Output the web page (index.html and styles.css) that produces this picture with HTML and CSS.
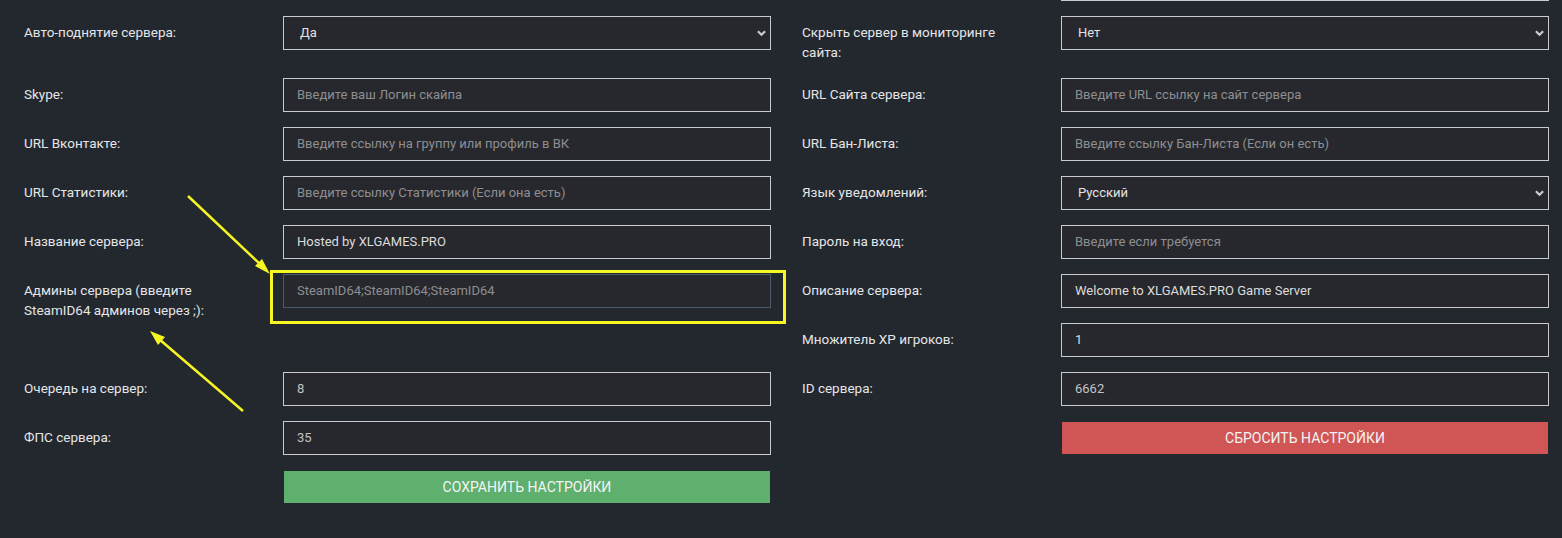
FILE: index.html
```html
<!DOCTYPE html>
<html lang="ru">
<head>
  <meta charset="UTF-8" />
  <title>Настройки сервера</title>
  <meta name="viewport" content="width=device-width, initial-scale=1" />
  <link rel="stylesheet" href="styles.css">
</head>
<body>

  <form class="settings">
    <!-- tail of the row above (page is scrolled) -->
    <div></div><div></div><div></div>
    <input type="text" class="field" value="" />

    <label class="lbl">Авто-поднятие сервера:</label>
    <div class="select-wrap">
      <select class="field"><option>Да</option><option>Нет</option></select>
      <svg class="chev" viewBox="0 0 10 6"><path d="M1 1l4 4 4-4" /></svg>
    </div>
    <label class="lbl lbl-r">Скрыть сервер в мониторинге сайта:</label>
    <div class="select-wrap">
      <select class="field"><option>Нет</option><option>Да</option></select>
      <svg class="chev" viewBox="0 0 10 6"><path d="M1 1l4 4 4-4" /></svg>
    </div>

    <label class="lbl">Skype:</label>
    <input type="text" class="field" placeholder="Введите ваш Логин скайпа" />
    <label class="lbl lbl-r">URL Сайта сервера:</label>
    <input type="text" class="field" placeholder="Введите URL ссылку на сайт сервера" />

    <label class="lbl">URL Вконтакте:</label>
    <input type="text" class="field" placeholder="Введите ссылку на группу или профиль в ВК" />
    <label class="lbl lbl-r">URL Бан-Листа:</label>
    <input type="text" class="field" placeholder="Введите ссылку Бан-Листа (Если он есть)" />

    <label class="lbl">URL Статистики:</label>
    <input type="text" class="field" placeholder="Введите ссылку Статистики (Если она есть)" />
    <label class="lbl lbl-r">Язык уведомлений:</label>
    <div class="select-wrap">
      <select class="field"><option>Русский</option><option>English</option></select>
      <svg class="chev" viewBox="0 0 10 6"><path d="M1 1l4 4 4-4" /></svg>
    </div>

    <label class="lbl">Название сервера:</label>
    <input type="text" class="field" value="Hosted by XLGAMES.PRO" />
    <label class="lbl lbl-r">Пароль на вход:</label>
    <input type="text" class="field" placeholder="Введите если требуется" />

    <label class="lbl span2">Админы сервера (введите SteamID64 админов через ;):</label>
    <input type="text" class="field focused" placeholder="SteamID64;SteamID64;SteamID64" />
    <label class="lbl lbl-r">Описание сервера:</label>
    <input type="text" class="field" value="Welcome to XLGAMES.PRO Game Server" />

    <div></div>
    <label class="lbl lbl-r">Множитель XP игроков:</label>
    <input type="text" class="field" value="1" />

    <label class="lbl">Очередь на сервер:</label>
    <input type="text" class="field dim" value="8" />
    <label class="lbl lbl-r">ID сервера:</label>
    <input type="text" class="field dim" value="6662" />

    <label class="lbl">ФПС сервера:</label>
    <input type="text" class="field dim" value="35" />
    <div></div>
    <button type="button" class="btn btn-red">Сбросить настройки</button>

    <div></div>
    <button type="button" class="btn btn-green">Сохранить настройки</button>
  </form>

  <!-- screenshot annotation -->
  <svg class="marks" width="1562" height="538" viewBox="0 0 1562 538">
    <rect x="271.5" y="271.5" width="513" height="51" fill="none" stroke="#f6f623" stroke-width="3" />
    <line x1="188" y1="196" x2="261" y2="265" stroke="#f6f623" stroke-width="2.5" />
    <polygon points="270,274 255,266 262,259" fill="#f6f623" />
    <line x1="243" y1="411" x2="159" y2="339" stroke="#f6f623" stroke-width="2.5" />
    <polygon points="150,331 165,337 158,345" fill="#f6f623" />
  </svg>

</body>
</html>
```

FILE: styles.css
```css
:root {
  --bg: #23272e;
  --field-bg: #27282d;
  --border: #c9cacd;
  --text: #e4e6e8;
}
body {
  background-color: var(--bg);
  font-family: Roboto, 'Liberation Sans', sans-serif;
  margin: 0;
  overflow: hidden;
  position: relative;
  height: 538px;
}
.settings {
  display: grid;
  grid-template-columns: 283px 488px 290px 488px;
  row-gap: 15px;
  align-items: start;
  margin-top: -33px;
}
.lbl {
  color: var(--text);
  font-size: 13.5px;
  line-height: 20px;
  padding: 6px 49px 1px 24px;
}
.lbl-r {
  padding-left: 31px;
  padding-right: 49px;
}
.span2 {
  grid-row: span 2;
}
.field {
  box-sizing: border-box;
  width: 100%;
  height: 34px;
  margin: 0;
  padding: 0 13px 1px;
  background-color: var(--field-bg);
  border: 1px solid var(--border);
  border-radius: 0;
  color: #dcdcdc;
  font-family: inherit;
  font-size: 13px;
  outline: none;
}
.field::placeholder {
  color: #8d8e91;
}
.field.dim {
  color: #c2c3c5;
}
.field.focused {
  border-color: #4c5a6b;
}
.select-wrap {
  position: relative;
}
select.field {
  appearance: none;
  padding-left: 16px;
  color: #e2e2e2;
}
.chev {
  position: absolute;
  right: 5px;
  top: 14px;
  width: 9px;
  height: 6px;
  fill: none;
  stroke: #c9cacd;
  stroke-width: 2.4;
  pointer-events: none;
}
.btn {
  height: 32px;
  margin: 1px;
  border: none;
  border-radius: 0;
  color: #f4f4f4;
  font-family: inherit;
  font-size: 14px;
  text-transform: uppercase;
  cursor: pointer;
}
.btn-green {
  background-color: #5faf6e;
}
.btn-red {
  background-color: #d05555;
}
.marks {
  position: absolute;
  left: 0;
  top: 0;
  pointer-events: none;
}
```
